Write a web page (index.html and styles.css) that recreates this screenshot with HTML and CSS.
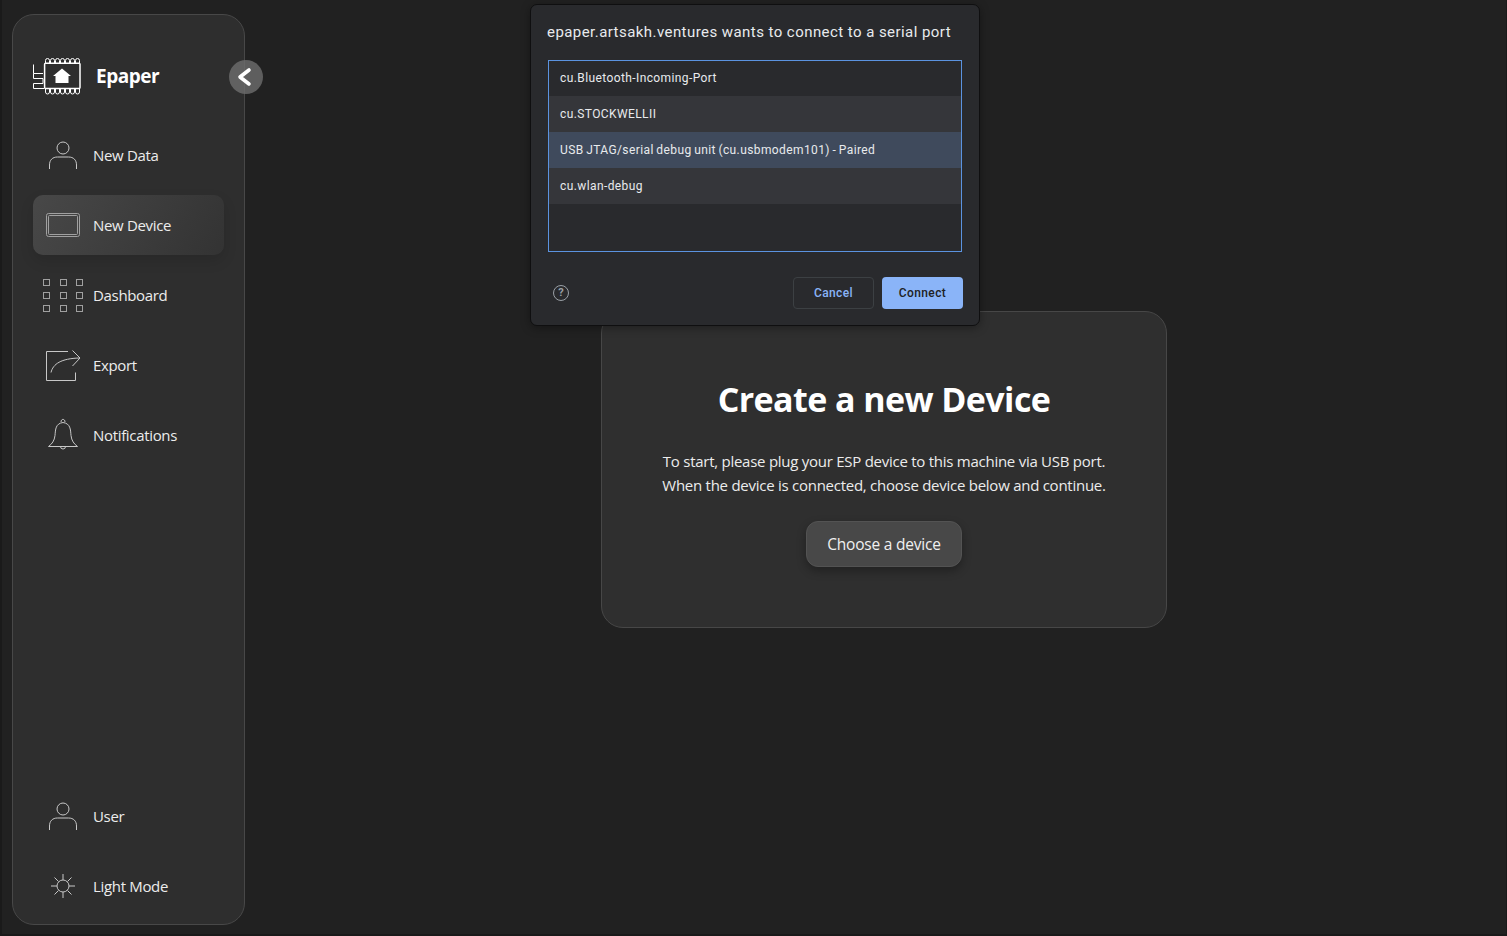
FILE: index.html
```html
<!DOCTYPE html>
<html lang="en">
<head>
  <meta charset="UTF-8" />
  <title>Epaper</title>
  <link rel="stylesheet" href="styles.css">
</head>
<body>
  <aside class="sidebar">
    <div class="brand">
      <svg class="logo" width="50" height="40" viewBox="0 0 50 40" fill="none" stroke="#fff" stroke-width="1">
        <rect x="12.600" y="6.200" width="35.400" height="25.400" rx="1" stroke-width="1.500"/>
        <path d="M13.500 6V3.500a2 2 0 0 1 4 0V6M18.500 6V3.500a2 2 0 0 1 4 0V6M23.500 6V3.500a2 2 0 0 1 4 0V6M28.500 6V3.500a2 2 0 0 1 4 0V6M33.500 6V3.500a2 2 0 0 1 4 0V6M38.500 6V3.500a2 2 0 0 1 4 0V6M43.500 6V3.500a2 2 0 0 1 4 0V6"/>
        <path d="M13.500 32v3a2 2 0 0 0 4 0v-3M18.500 32v3a2 2 0 0 0 4 0v-3M23.500 32v3a2 2 0 0 0 4 0v-3M28.500 32v3a2 2 0 0 0 4 0v-3M33.500 32v3a2 2 0 0 0 4 0v-3M38.500 32v3a2 2 0 0 0 4 0v-3M43.500 32v3a2 2 0 0 0 4 0v-3"/>
        <path d="M12 31.500H1.500V26.500H11V21.500H1.500V16.500H11M1.500 16.500V7.500"/>
        <path d="M30 11.500l9 7.500h-2.500v7h-13v-7H21z" fill="#fff" stroke="none"/>
      </svg>
      <span class="brand-name">Epaper</span>
    </div>
    <button class="collapse" aria-label="Collapse">
      <svg width="34" height="34" viewBox="0 0 34 34" fill="none" stroke="#fff" stroke-width="3.600" stroke-linecap="round" stroke-linejoin="round"><path d="M20 10l-9 7 9 7"/></svg>
    </button>

    <nav class="nav">
      <a class="nav-item">
        <svg class="icon" width="40" height="40" viewBox="0 0 40 40"><circle cx="20" cy="13" r="6"/><path d="M6.500 34v-4c0-5 3-8 8-8h11c5 0 8 3 8 8v4"/></svg>
        New Data
      </a>
      <a class="nav-item active">
        <svg class="icon dim" width="40" height="40" viewBox="0 0 40 40"><rect x="3.500" y="8.500" width="33" height="23" rx="2"/><rect x="5.500" y="10.500" width="29" height="19" rx="1"/></svg>
        New Device
      </a>
      <a class="nav-item">
        <svg class="icon dim" width="40" height="40" viewBox="0 0 40 40"><rect x="0.500" y="4.500" width="6" height="6"/><rect x="17.500" y="4.500" width="6" height="6"/><rect x="33.500" y="4.500" width="6" height="6"/><rect x="0.500" y="17.500" width="6" height="6"/><rect x="17.500" y="17.500" width="6" height="6"/><rect x="33.500" y="17.500" width="6" height="6"/><rect x="0.500" y="30.500" width="6" height="6"/><rect x="17.500" y="30.500" width="6" height="6"/><rect x="33.500" y="30.500" width="6" height="6"/></svg>
        Dashboard
      </a>
      <a class="nav-item">
        <svg class="icon" width="40" height="40" viewBox="0 0 40 40"><path d="M25 6.500H3.500v29h29v-8"/><path d="M8 27.500C10 19 18 13.500 36.500 13"/><path d="M29.500 5.500l7.500 7.500-7.500 8"/></svg>
        Export
      </a>
      <a class="nav-item">
        <svg class="icon" width="40" height="40" viewBox="0 0 40 40"><path d="M5.500 31.500c3.500-2.500 6-6 6.500-11 .5-6 .5-12 8-13 7.500 1 7.500 7 8 13 .5 5 3 8.500 6.500 11z"/><path d="M18 7c0-3.500 4-3.500 4 0"/><path d="M17.500 31.500a2.500 2.500 0 0 0 5 0"/></svg>
        Notifications
      </a>
    </nav>

    <nav class="nav nav-bottom">
      <a class="nav-item">
        <svg class="icon" width="40" height="40" viewBox="0 0 40 40"><circle cx="20" cy="13" r="6"/><path d="M6.500 34v-4c0-5 3-8 8-8h11c5 0 8 3 8 8v4"/></svg>
        User
      </a>
      <a class="nav-item">
        <svg class="icon" width="40" height="40" viewBox="0 0 40 40"><circle cx="20" cy="20" r="6"/><path d="M20 8v6M20 26v6M8 20h6M26 20h6M11.500 11.500l4 4M24.500 24.500l4 4M11.500 28.500l4-4M24.500 15.500l4-4"/></svg>
        Light Mode
      </a>
    </nav>
  </aside>

  <main class="main">
    <section class="card">
      <h1>Create a new Device</h1>
      <p>To start, please plug your ESP device to this machine via USB port.<br>When the device is connected, choose device below and continue.</p>
      <button class="choose">Choose a device</button>
    </section>
  </main>

  <div class="dialog">
    <div class="dialog-title">epaper.artsakh.ventures wants to connect to a serial port</div>
    <ul class="ports">
      <li>cu.Bluetooth-Incoming-Port</li>
      <li class="alt">cu.STOCKWELLII</li>
      <li class="selected">USB JTAG/serial debug unit (cu.usbmodem101) - Paired</li>
      <li class="alt">cu.wlan-debug</li>
    </ul>
    <div class="dialog-foot">
      <span class="help">?</span>
      <button class="btn-cancel">Cancel</button>
      <button class="btn-connect">Connect</button>
    </div>
  </div>
</body>
</html>
```

FILE: styles.css
```css
* { box-sizing: border-box; }

html, body { height: 100%; }

body {
  margin: 0;
  display: flex;
  padding: 14px 0 9px 10px;
  background-color: #212121;
  border-left: 2px solid #1a1a1a;
  border-bottom: 2px solid #1a1a1a;
  border-right: 1px solid #1a1a1a;
  color: #ececec;
  font-family: "Open Sans", "Noto Sans", sans-serif;
  overflow: hidden;
}

.sidebar {
  position: relative;
  width: 233px;
  flex-shrink: 0;
  display: flex;
  flex-direction: column;
  padding: 31px 20px 8px;
  background-color: #2e2e2e;
  border: 1px solid #484848;
  border-radius: 22px;
}

.brand {
  display: flex;
  align-items: center;
  gap: 14px;
  height: 60px;
  margin-bottom: 19px;
  margin-left: -1px;
}

.logo { flex-shrink: 0; margin-top: 1px; }

.brand-name {
  font-size: 19px;
  font-weight: 700;
  letter-spacing: -0.5px;
  color: #fff;
}

.collapse {
  position: absolute;
  top: 45px;
  right: -19px;
  width: 34px;
  height: 34px;
  padding: 0;
  border: none;
  border-radius: 50%;
  background-color: rgba(110, 110, 110, 0.8);
}

.nav {
  display: flex;
  flex-direction: column;
  gap: 10px;
}

.nav-bottom { margin-top: auto; }

.nav-item {
  display: flex;
  align-items: center;
  gap: 10px;
  height: 60px;
  padding-left: 10px;
  border-radius: 10px;
  font-size: 15px;
  letter-spacing: -0.33px;
  color: #ececec;
}

.nav-item.active {
  background: linear-gradient(120deg, #484848, #333333);
  box-shadow: 0 6px 14px rgba(0, 0, 0, 0.12);
}

.icon {
  flex-shrink: 0;
  fill: none;
  stroke: #c8c8c8;
  stroke-width: 1;
}

.icon.dim { stroke: #a0a0a0; }

.main {
  flex: 1;
  display: flex;
  align-items: center;
  justify-content: center;
  padding-left: 17px;
}

.card {
  width: 566px;
  height: 317px;
  padding: 63px 20px 0;
  background-color: #2f2f2f;
  border: 1px solid #474747;
  border-radius: 22px;
  text-align: center;
}

.card h1 {
  margin: 0;
  font-size: 34px;
  line-height: 48px;
  font-weight: 700;
  letter-spacing: -0.58px;
  color: #fff;
}

.card p {
  margin: 26px 0 0;
  font-size: 15px;
  line-height: 24px;
  letter-spacing: -0.26px;
  color: #ececec;
}

.choose {
  width: 156px;
  height: 46px;
  margin-top: 24px;
  border: 1px solid #535353;
  border-radius: 12px;
  background-color: #484848;
  box-shadow: 0 4px 10px rgba(0, 0, 0, 0.3);
  color: #f0f0f0;
  font-family: inherit;
  font-size: 15.500px;
  letter-spacing: -0.2px;
}

.dialog {
  position: absolute;
  top: 4px;
  left: 530px;
  width: 450px;
  height: 322px;
  padding: 17px 16px 16px;
  background-color: #292a2d;
  border: 1px solid #0f0f10;
  border-radius: 7px;
  box-shadow: 0 2px 10px rgba(0, 0, 0, 0.35);
  font-family: Roboto, "Liberation Sans", sans-serif;
}

.dialog-title {
  height: 22px;
  font-size: 15px;
  line-height: 20px;
  font-weight: 400;
  letter-spacing: 0.44px;
  color: #e8eaed;
}

.ports {
  height: 192px;
  margin: 16px 1px 0;
  padding: 0;
  list-style: none;
  border: 1px solid #5b93e0;
  font-size: 12px;
  letter-spacing: 0.4px;
  word-spacing: -0.8px;
  color: #e8eaed;
}

.ports li {
  height: 36px;
  padding-left: 11px;
  line-height: 36px;
}

.ports li:first-child {
  height: 35px;
  line-height: 34px;
}

.ports .alt { background-color: #35363a; }
.ports .selected { background-color: #3f4a5c; }

.dialog-foot {
  display: flex;
  align-items: center;
  gap: 8px;
  margin-top: 25px;
}

.help {
  width: 16px;
  height: 16px;
  margin-left: 6px;
  margin-right: auto;
  border: 1.500px solid #9aa0a6;
  border-radius: 50%;
  color: #9aa0a6;
  font-size: 11px;
  font-weight: 700;
  line-height: 13px;
  text-align: center;
}

.dialog-foot button {
  width: 81px;
  height: 32px;
  padding: 0;
  border-radius: 4px;
  font-family: inherit;
  font-size: 12px;
  font-weight: 500;
  letter-spacing: 0.4px;
}

.btn-cancel {
  background: transparent;
  border: 1px solid #3c4043;
  color: #8ab4f8;
}

.btn-connect {
  background-color: #8ab4f8;
  border: none;
  color: #202124;
}
```
